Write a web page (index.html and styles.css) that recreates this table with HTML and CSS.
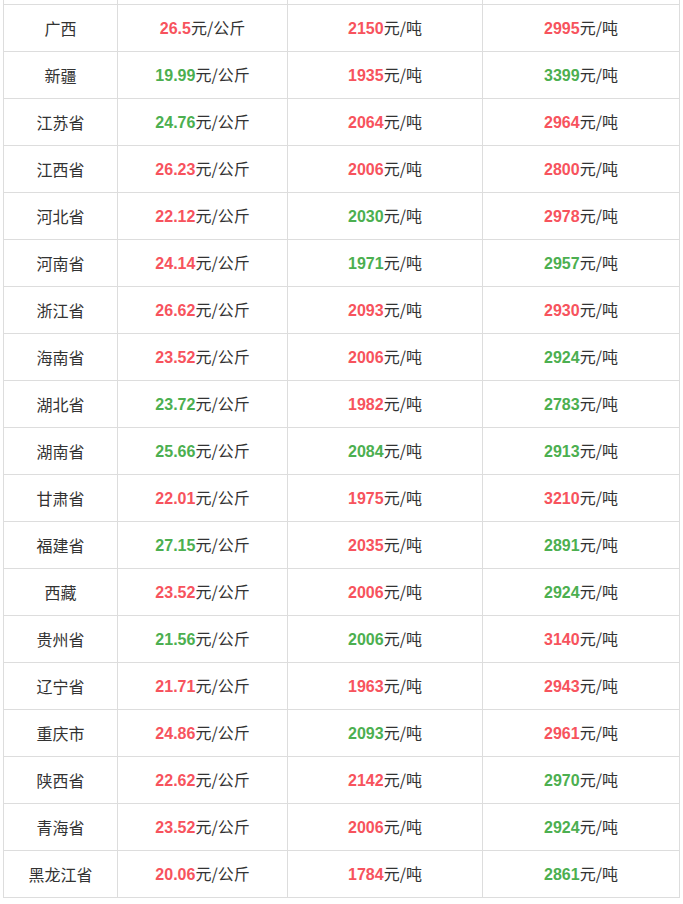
FILE: index.html
```html
<!DOCTYPE html>
<html lang="zh-CN">
<head>
<meta charset="utf-8">
<title>价格表</title>
<link rel="stylesheet" href="styles.css">
</head>
<body>
<div class="wrap">
<table class="price-table">
<colgroup>
<col class="c1"><col class="c2"><col class="c3"><col class="c4">
</colgroup>
<tbody>
<tr class="cut"><td></td><td></td><td></td><td></td></tr>
<tr><td>广西</td><td><b class="up">26.5</b>元/公斤</td><td><b class="up">2150</b>元/吨</td><td><b class="up">2995</b>元/吨</td></tr>
<tr><td>新疆</td><td><b class="dn">19.99</b>元/公斤</td><td><b class="up">1935</b>元/吨</td><td><b class="dn">3399</b>元/吨</td></tr>
<tr><td>江苏省</td><td><b class="dn">24.76</b>元/公斤</td><td><b class="up">2064</b>元/吨</td><td><b class="up">2964</b>元/吨</td></tr>
<tr><td>江西省</td><td><b class="up">26.23</b>元/公斤</td><td><b class="up">2006</b>元/吨</td><td><b class="up">2800</b>元/吨</td></tr>
<tr><td>河北省</td><td><b class="up">22.12</b>元/公斤</td><td><b class="dn">2030</b>元/吨</td><td><b class="up">2978</b>元/吨</td></tr>
<tr><td>河南省</td><td><b class="up">24.14</b>元/公斤</td><td><b class="dn">1971</b>元/吨</td><td><b class="dn">2957</b>元/吨</td></tr>
<tr><td>浙江省</td><td><b class="up">26.62</b>元/公斤</td><td><b class="up">2093</b>元/吨</td><td><b class="up">2930</b>元/吨</td></tr>
<tr><td>海南省</td><td><b class="up">23.52</b>元/公斤</td><td><b class="up">2006</b>元/吨</td><td><b class="dn">2924</b>元/吨</td></tr>
<tr><td>湖北省</td><td><b class="dn">23.72</b>元/公斤</td><td><b class="up">1982</b>元/吨</td><td><b class="dn">2783</b>元/吨</td></tr>
<tr><td>湖南省</td><td><b class="dn">25.66</b>元/公斤</td><td><b class="dn">2084</b>元/吨</td><td><b class="dn">2913</b>元/吨</td></tr>
<tr><td>甘肃省</td><td><b class="up">22.01</b>元/公斤</td><td><b class="up">1975</b>元/吨</td><td><b class="up">3210</b>元/吨</td></tr>
<tr><td>福建省</td><td><b class="dn">27.15</b>元/公斤</td><td><b class="up">2035</b>元/吨</td><td><b class="dn">2891</b>元/吨</td></tr>
<tr><td>西藏</td><td><b class="up">23.52</b>元/公斤</td><td><b class="up">2006</b>元/吨</td><td><b class="dn">2924</b>元/吨</td></tr>
<tr><td>贵州省</td><td><b class="dn">21.56</b>元/公斤</td><td><b class="dn">2006</b>元/吨</td><td><b class="up">3140</b>元/吨</td></tr>
<tr><td>辽宁省</td><td><b class="up">21.71</b>元/公斤</td><td><b class="up">1963</b>元/吨</td><td><b class="up">2943</b>元/吨</td></tr>
<tr><td>重庆市</td><td><b class="up">24.86</b>元/公斤</td><td><b class="dn">2093</b>元/吨</td><td><b class="up">2961</b>元/吨</td></tr>
<tr><td>陕西省</td><td><b class="up">22.62</b>元/公斤</td><td><b class="up">2142</b>元/吨</td><td><b class="dn">2970</b>元/吨</td></tr>
<tr><td>青海省</td><td><b class="up">23.52</b>元/公斤</td><td><b class="up">2006</b>元/吨</td><td><b class="dn">2924</b>元/吨</td></tr>
<tr><td>黑龙江省</td><td><b class="up">20.06</b>元/公斤</td><td><b class="up">1784</b>元/吨</td><td><b class="dn">2861</b>元/吨</td></tr>
</tbody>
</table>
</div>
</body>
</html>
```

FILE: styles.css
```css
html, body {
  margin: 0;
  padding: 0;
  background: #ffffff;
}
.wrap {
  padding-left: 3px;
  overflow: hidden;
}
.price-table {
  margin-top: -1px;
  border-collapse: collapse;
  table-layout: fixed;
  width: 677px;
  font-family: "Noto Sans CJK SC", "Liberation Sans", sans-serif;
  font-size: 16px;
  color: #333333;
}
.c1 { width: 114px; }
.c2 { width: 170px; }
.c3 { width: 195px; }
.c4 { width: 197px; }
.price-table td {
  border: 1px solid #dddddd;
  height: 46px;
  padding: 0;
  text-align: center;
  vertical-align: middle;
  line-height: 20px;
}
.price-table tr.cut td {
  height: 4px;
}
.price-table b {
  font-family: "Liberation Sans", sans-serif;
  font-weight: bold;
}
.up { color: #f7535d; }
.dn { color: #4caf50; }
```
